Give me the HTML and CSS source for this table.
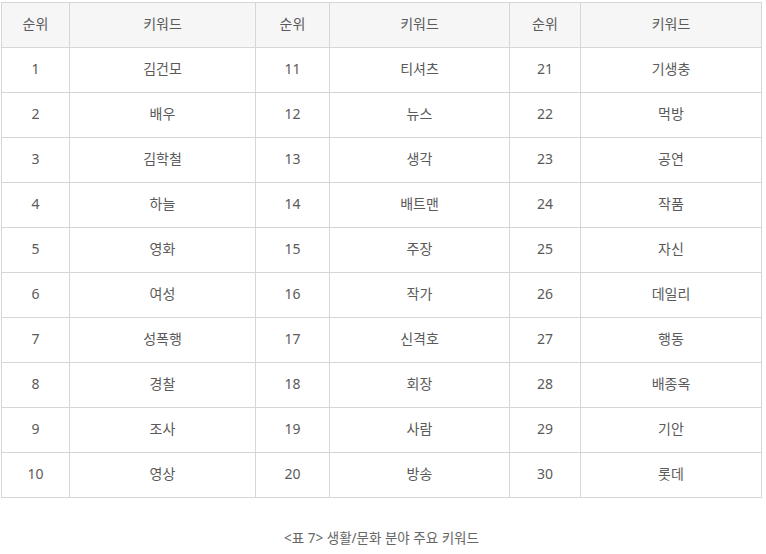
FILE: index.html
```html
<!DOCTYPE html>
<html lang="ko">
<head>
<meta charset="utf-8">
<link rel="stylesheet" href="styles.css">
</head>
<body>
<div class="wrap">
<table class="kw">
<colgroup>
<col class="c-rank1"><col class="c-kw1"><col class="c-rank2"><col class="c-kw2"><col class="c-rank3"><col class="c-kw3">
</colgroup>
<thead>
<tr><th>순위</th><th>키워드</th><th>순위</th><th>키워드</th><th>순위</th><th>키워드</th></tr>
</thead>
<tbody>
<tr><td>1</td><td>김건모</td><td>11</td><td>티셔츠</td><td>21</td><td>기생충</td></tr>
<tr><td>2</td><td>배우</td><td>12</td><td>뉴스</td><td>22</td><td>먹방</td></tr>
<tr><td>3</td><td>김학철</td><td>13</td><td>생각</td><td>23</td><td>공연</td></tr>
<tr><td>4</td><td>하늘</td><td>14</td><td>배트맨</td><td>24</td><td>작품</td></tr>
<tr><td>5</td><td>영화</td><td>15</td><td>주장</td><td>25</td><td>자신</td></tr>
<tr><td>6</td><td>여성</td><td>16</td><td>작가</td><td>26</td><td>데일리</td></tr>
<tr><td>7</td><td>성폭행</td><td>17</td><td>신격호</td><td>27</td><td>행동</td></tr>
<tr><td>8</td><td>경찰</td><td>18</td><td>회장</td><td>28</td><td>배종옥</td></tr>
<tr><td>9</td><td>조사</td><td>19</td><td>사람</td><td>29</td><td>기안</td></tr>
<tr><td>10</td><td>영상</td><td>20</td><td>방송</td><td>30</td><td>롯데</td></tr>
</tbody>
</table>
<p class="caption">&lt;표 7&gt; 생활/문화 분야 주요 키워드</p>
</div>
</body>
</html>
```
FILE: styles.css
```css
html, body {
  margin: 0;
  padding: 0;
  background: #fff;
}
body {
  font-family: "Noto Sans", "Noto Sans CJK KR", sans-serif;
  color: #555;
}
.wrap {
  padding: 2px 0 0 1px;
  width: 761px;
}
.kw {
  border-collapse: collapse;
  table-layout: fixed;
  width: 761px;
}
.c-rank1 { width: 68px; }
.c-kw1 { width: 186px; }
.c-rank2 { width: 74px; }
.c-kw2 { width: 180px; }
.c-rank3 { width: 71px; }
.c-kw3 { width: 181px; }
.kw th, .kw td {
  border: 1px solid #d6d6d6;
  height: 42px;
  padding: 0 0 2px;
  text-align: center;
  vertical-align: middle;
  font-size: 14px;
  font-weight: 400;
  color: #5a5a5a;
  line-height: 20px;
}
.kw th {
  background: #f6f6f6;
}
.caption {
  margin: 32px 0 0;
  text-align: center;
  font-size: 13.5px;
  line-height: 16px;
  color: #666;
}
```
